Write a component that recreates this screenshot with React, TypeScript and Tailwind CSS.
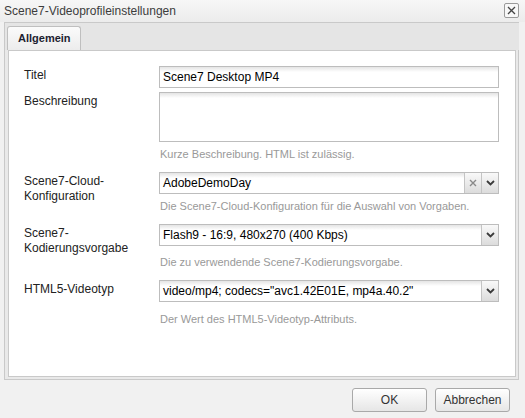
import React from "react";

const Chevron = () => (
  <svg width="9" height="6" viewBox="0 0 9 6">
    <path d="M1 1 L4.5 4.5 L8 1" stroke="#3a3a3a" strokeWidth="1.8" fill="none" />
  </svg>
);

const ClearX = () => (
  <svg width="8" height="8" viewBox="0 0 8 8">
    <path d="M1 1 L7 7 M7 1 L1 7" stroke="#8a8a8a" strokeWidth="1.4" fill="none" />
  </svg>
);

function Trigger({ children }: { children: React.ReactNode }) {
  return (
    <div className="w-[17px] h-full flex items-center justify-center border-l border-[#c4c4c4] bg-[linear-gradient(to_bottom,#f9f9f9,#dcdcdc)]">
      {children}
    </div>
  );
}

function Field({ value, clear, trigger }: { value: string; clear?: boolean; trigger?: boolean }) {
  return (
    <div className="h-[22px] w-[340px] flex border border-[#bdbdbd] bg-[linear-gradient(to_bottom,#e4e4e4,#ffffff_5px)]">
      <div className="flex-1 pl-[3px] leading-[20px] text-[12px] text-black whitespace-nowrap overflow-hidden">
        {value}
      </div>
      {clear && (
        <Trigger>
          <ClearX />
        </Trigger>
      )}
      {trigger && (
        <Trigger>
          <Chevron />
        </Trigger>
      )}
    </div>
  );
}

function Label({ children }: { children: React.ReactNode }) {
  return <div className="w-[135px] shrink-0 pt-[2px] leading-[15px] text-[12px] text-[#222]">{children}</div>;
}

function Help({ children, mt }: { children: React.ReactNode; mt: string }) {
  return <div className={`${mt} h-[16px] leading-[16px] pl-[1px] text-[11px] text-[#999] whitespace-nowrap`}>{children}</div>;
}

function Button({ children }: { children: React.ReactNode }) {
  return (
    <div className="w-[75px] h-[24px] flex items-center justify-center rounded-[3px] border border-[#a9a9a9] bg-[linear-gradient(to_bottom,#ffffff,#e6e6e6)] text-[12px] text-[#333]">
      {children}
    </div>
  );
}

export default function App() {
  return (
    <div className="w-[525px] h-[418px] bg-[#f1f1f1] flex flex-col font-[family-name:Liberation_Sans,Arial,sans-serif] overflow-hidden">
      <div className="h-[22px] flex items-center justify-between pl-[4px] pr-[6px] bg-[linear-gradient(to_bottom,#f7f7f7,#ececec)]">
        <span className="text-[12px] text-[#3c3c3c]">Scene7-Videoprofileinstellungen</span>
        <div className="w-[15px] h-[15px] mt-[-2px] flex items-center justify-center rounded-[2px] border border-[#9a9a9a] bg-[#f8f8f8]">
          <svg width="9" height="9" viewBox="0 0 9 9">
            <path d="M1 1 L8 8 M8 1 L1 8" stroke="#444" strokeWidth="1.3" fill="none" />
          </svg>
        </div>
      </div>

      <div className="ml-[4px] w-[515px] h-[358px] border border-[#c9c9c9] bg-[#e9e9e9] flex flex-col pl-[3px] pr-[2px] pb-[2px]">
        <div className="h-[27px] flex items-end pl-[2px] bg-[#e5e5e5] -mx-[3px] px-[8px]">
          <div className="w-[74px] h-[24px] rounded-t-[3px] border border-b-0 border-[#bfbfbf] bg-[linear-gradient(to_bottom,#fbfbfb,#ececec)] flex items-center pl-[10px] text-[11px] font-bold text-[#1c2230]">
            Allgemein
          </div>
        </div>
        <div className="flex-1 bg-white border border-[#c9c9c9] pl-[15px] pt-[15px] flex flex-col">
          <div className="flex">
            <Label>Titel</Label>
            <Field value="Scene7 Desktop MP4" />
          </div>

          <div className="flex mt-[4px]">
            <Label>Beschreibung</Label>
            <div className="flex flex-col">
              <div className="h-[50px] w-[340px] border border-[#bdbdbd] bg-[linear-gradient(to_bottom,#e4e4e4,#ffffff_5px)]" />
              <Help mt="mt-[4px]">Kurze Beschreibung. HTML ist zulässig.</Help>
            </div>
          </div>

          <div className="flex mt-[10px]">
            <Label>
              Scene7-Cloud-
              <br />
              Konfiguration
            </Label>
            <div className="flex flex-col">
              <Field value="AdobeDemoDay" clear trigger />
              <Help mt="mt-[4px]">Die Scene7-Cloud-Konfiguration für die Auswahl von Vorgaben.</Help>
            </div>
          </div>

          <div className="flex mt-[10px]">
            <Label>
              Scene7-
              <br />
              Kodierungsvorgabe
            </Label>
            <div className="flex flex-col">
              <Field value="Flash9 - 16:9, 480x270 (400 Kbps)" trigger />
              <Help mt="mt-[8px]">Die zu verwendende Scene7-Kodierungsvorgabe.</Help>
            </div>
          </div>

          <div className="flex mt-[10px]">
            <Label>HTML5-Videotyp</Label>
            <div className="flex flex-col">
              <Field value={'video/mp4; codecs="avc1.42E01E, mp4a.40.2"'} trigger />
              <Help mt="mt-[9px]">Der Wert des HTML5-Videotyp-Attributs.</Help>
            </div>
          </div>
        </div>
      </div>

      <div className="flex justify-end gap-[8px] pr-[15px] pt-[8px]">
        <Button>OK</Button>
        <Button>Abbrechen</Button>
      </div>
    </div>
  );
}
